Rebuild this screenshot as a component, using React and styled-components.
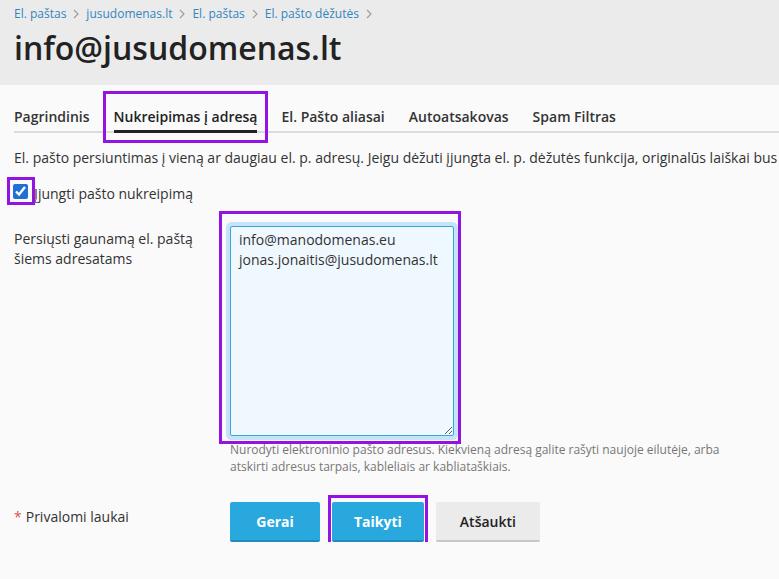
import React from "react";
import styled, { createGlobalStyle } from "styled-components";

const Global = createGlobalStyle`
  body {
    margin: 0;
    background: #fafafa;
    font-family: "Open Sans", "Noto Sans", sans-serif;
    color: #333;
    overflow: hidden;
  }
`;

const S = {};

S.Header = styled.header`
  height: 85px;
  box-sizing: border-box;
  background: #ebebeb;
  padding: 5px 14px 0;
`;

S.Crumbs = styled.nav`
  display: flex;
  align-items: center;
  gap: 7px;
  font-size: 12px;
  line-height: 17px;
`;

S.Crumb = styled.a`
  color: #3385bf;
  text-decoration: none;
`;

S.Title = styled.h1`
  margin: 5px 0 0;
  font-size: 32px;
  line-height: 42px;
  font-weight: 600;
  color: #222;
`;

S.Content = styled.main`
  padding: 0 0 0 14px;
`;

S.TabBar = styled.div`
  display: flex;
  gap: 24px;
  padding-top: 22px;
  background: linear-gradient(#dcdcdc, #dcdcdc) bottom / 100% 2px no-repeat;
`;

S.Tab = styled.div`
  font-size: 14px;
  line-height: 20px;
  font-weight: 600;
  color: ${(p) => (p.$active ? "#222" : "#333")};
  padding-bottom: 3px;
  border-bottom: 3px solid ${(p) => (p.$active ? "#222" : "transparent")};
  white-space: nowrap;
`;

/* purple frame drawn over a control, without shifting the layout */
S.Highlight = styled.span`
  position: relative;
  z-index: 1;
  display: inline-flex;
  align-self: flex-start;
  border: 3px solid #9314e2;
  padding: ${(p) => `${p.$t}px ${p.$r}px ${p.$b}px ${p.$l}px`};
  margin: ${(p) => `-${p.$t + 3}px -${p.$r + 3}px -${p.$b + 3}px -${p.$l + 3}px`};
`;

S.Intro = styled.p`
  margin: 15px 0 0;
  font-size: 14px;
  line-height: 20px;
  white-space: nowrap;
`;

S.CheckRow = styled.label`
  display: flex;
  align-items: center;
  margin: 16px 0 0 -1px;
  font-size: 14px;
  line-height: 20px;
`;

S.Check = styled.input`
  width: 15px;
  height: 15px;
  margin: 0;
  accent-color: #1f6fd6;
`;

S.CheckText = styled.span`
  margin-left: 6px;
`;

S.FormRow = styled.div`
  display: grid;
  grid-template-columns: 216px 1fr;
  margin-top: 22px;
`;

S.Label = styled.div`
  padding-top: 3px;
  font-size: 14px;
  line-height: 20px;
  width: 190px;
`;

S.Field = styled.div`
  display: flex;
  flex-direction: column;
  align-items: flex-start;
`;

S.TextArea = styled.textarea`
  width: 224px;
  height: 210px;
  box-sizing: border-box;
  margin: 0;
  padding: 3px 8px;
  border: 1px solid #3aa6da;
  border-radius: 2px;
  background: #f0f8ff;
  box-shadow: 0 0 0 4px #c6e4f8;
  font-family: "Open Sans", "Noto Sans", sans-serif;
  font-size: 14px;
  line-height: 20px;
  color: #333;
  outline: none;
`;

S.Help = styled.div`
  margin-top: 5px;
  max-width: 500px;
  font-size: 12px;
  line-height: 17px;
  color: #777;
`;

S.Footer = styled.div`
  display: grid;
  grid-template-columns: 216px 1fr;
  align-items: center;
  margin-top: 27px;
`;

S.Required = styled.div`
  font-size: 14px;
  line-height: 20px;
  margin-top: -11px;
`;

S.Star = styled.span`
  color: #d9534f;
  margin-right: 4px;
`;

S.Buttons = styled.div`
  display: flex;
  align-items: flex-start;
  gap: 12px;
`;

S.Button = styled.button`
  min-width: 90px;
  height: 40px;
  padding: 0 ${(p) => (p.$primary ? 22 : 24)}px;
  box-sizing: border-box;
  border: 0;
  border-radius: 2px;
  border-bottom: 2px solid ${(p) => (p.$primary ? "#1f8bbd" : "#c6c6c6")};
  background: ${(p) => (p.$primary ? "#29a8dd" : "#ebebeb")};
  color: ${(p) => (p.$primary ? "#fff" : "#222")};
  font-family: "Open Sans", "Noto Sans", sans-serif;
  font-size: 14px;
  font-weight: ${(p) => (p.$primary ? 700 : 600)};
  cursor: pointer;
`;

const Chevron = () => (
  <svg width="6" height="10" viewBox="0 0 6 10" fill="none">
    <path d="M1 1l4 4-4 4" stroke="#9a9a9a" strokeWidth="1.1" />
  </svg>
);

const crumbs = ["El. paštas", "jusudomenas.lt", "El. paštas", "El. pašto dėžutės"];
const tabs = ["Pagrindinis", "Nukreipimas į adresą", "El. Pašto aliasai", "Autoatsakovas", "Spam Filtras"];
const ACTIVE = 1;

export default function App() {
  return (
    <>
      <Global />
      <S.Header>
        <S.Crumbs>
          {crumbs.map((c, i) => (
            <React.Fragment key={i}>
              <S.Crumb href="#">{c}</S.Crumb>
              <Chevron />
            </React.Fragment>
          ))}
        </S.Crumbs>
        <S.Title>info@jusudomenas.lt</S.Title>
      </S.Header>

      <S.Content>
        <S.TabBar>
          {tabs.map((t, i) =>
            i === ACTIVE ? (
              <S.Highlight key={t} $t={13} $r={8} $b={7} $l={8}>
                <S.Tab $active>{t}</S.Tab>
              </S.Highlight>
            ) : (
              <S.Tab key={t}>{t}</S.Tab>
            )
          )}
        </S.TabBar>

        <S.Intro>
          El. pašto persiuntimas į vieną ar daugiau el. p. adresų. Jeigu dėžuti įjungta el. p. dėžutės
          funkcija, originalūs laiškai bus
        </S.Intro>

        <S.CheckRow>
          <S.Highlight $t={4} $r={4} $b={3} $l={3}>
            <S.Check type="checkbox" defaultChecked />
          </S.Highlight>
          <S.CheckText>Įjungti pašto nukreipimą</S.CheckText>
        </S.CheckRow>

        <S.FormRow>
          <S.Label>Persiųsti gaunamą el. paštą šiems adresatams</S.Label>
          <S.Field>
            <S.Highlight $t={12} $r={4} $b={5} $l={8}>
              <S.TextArea
                defaultValue={"info@manodomenas.eu\njonas.jonaitis@jusudomenas.lt"}
              />
            </S.Highlight>
            <S.Help>
              Nurodyti elektroninio pašto adresus. Kiekvieną adresą galite rašyti naujoje
              eilutėje, arba atskirti adresus tarpais, kableliais ar kabliataškiais.
            </S.Help>
          </S.Field>
        </S.FormRow>

        <S.Footer>
          <S.Required>
            <S.Star>*</S.Star>Privalomi laukai
          </S.Required>
          <S.Buttons>
            <S.Button $primary>Gerai</S.Button>
            <S.Highlight $t={4} $r={1} $b={2} $l={1}>
              <S.Button $primary>Taikyti</S.Button>
            </S.Highlight>
            <S.Button>Atšaukti</S.Button>
          </S.Buttons>
        </S.Footer>
      </S.Content>
    </>
  );
}
